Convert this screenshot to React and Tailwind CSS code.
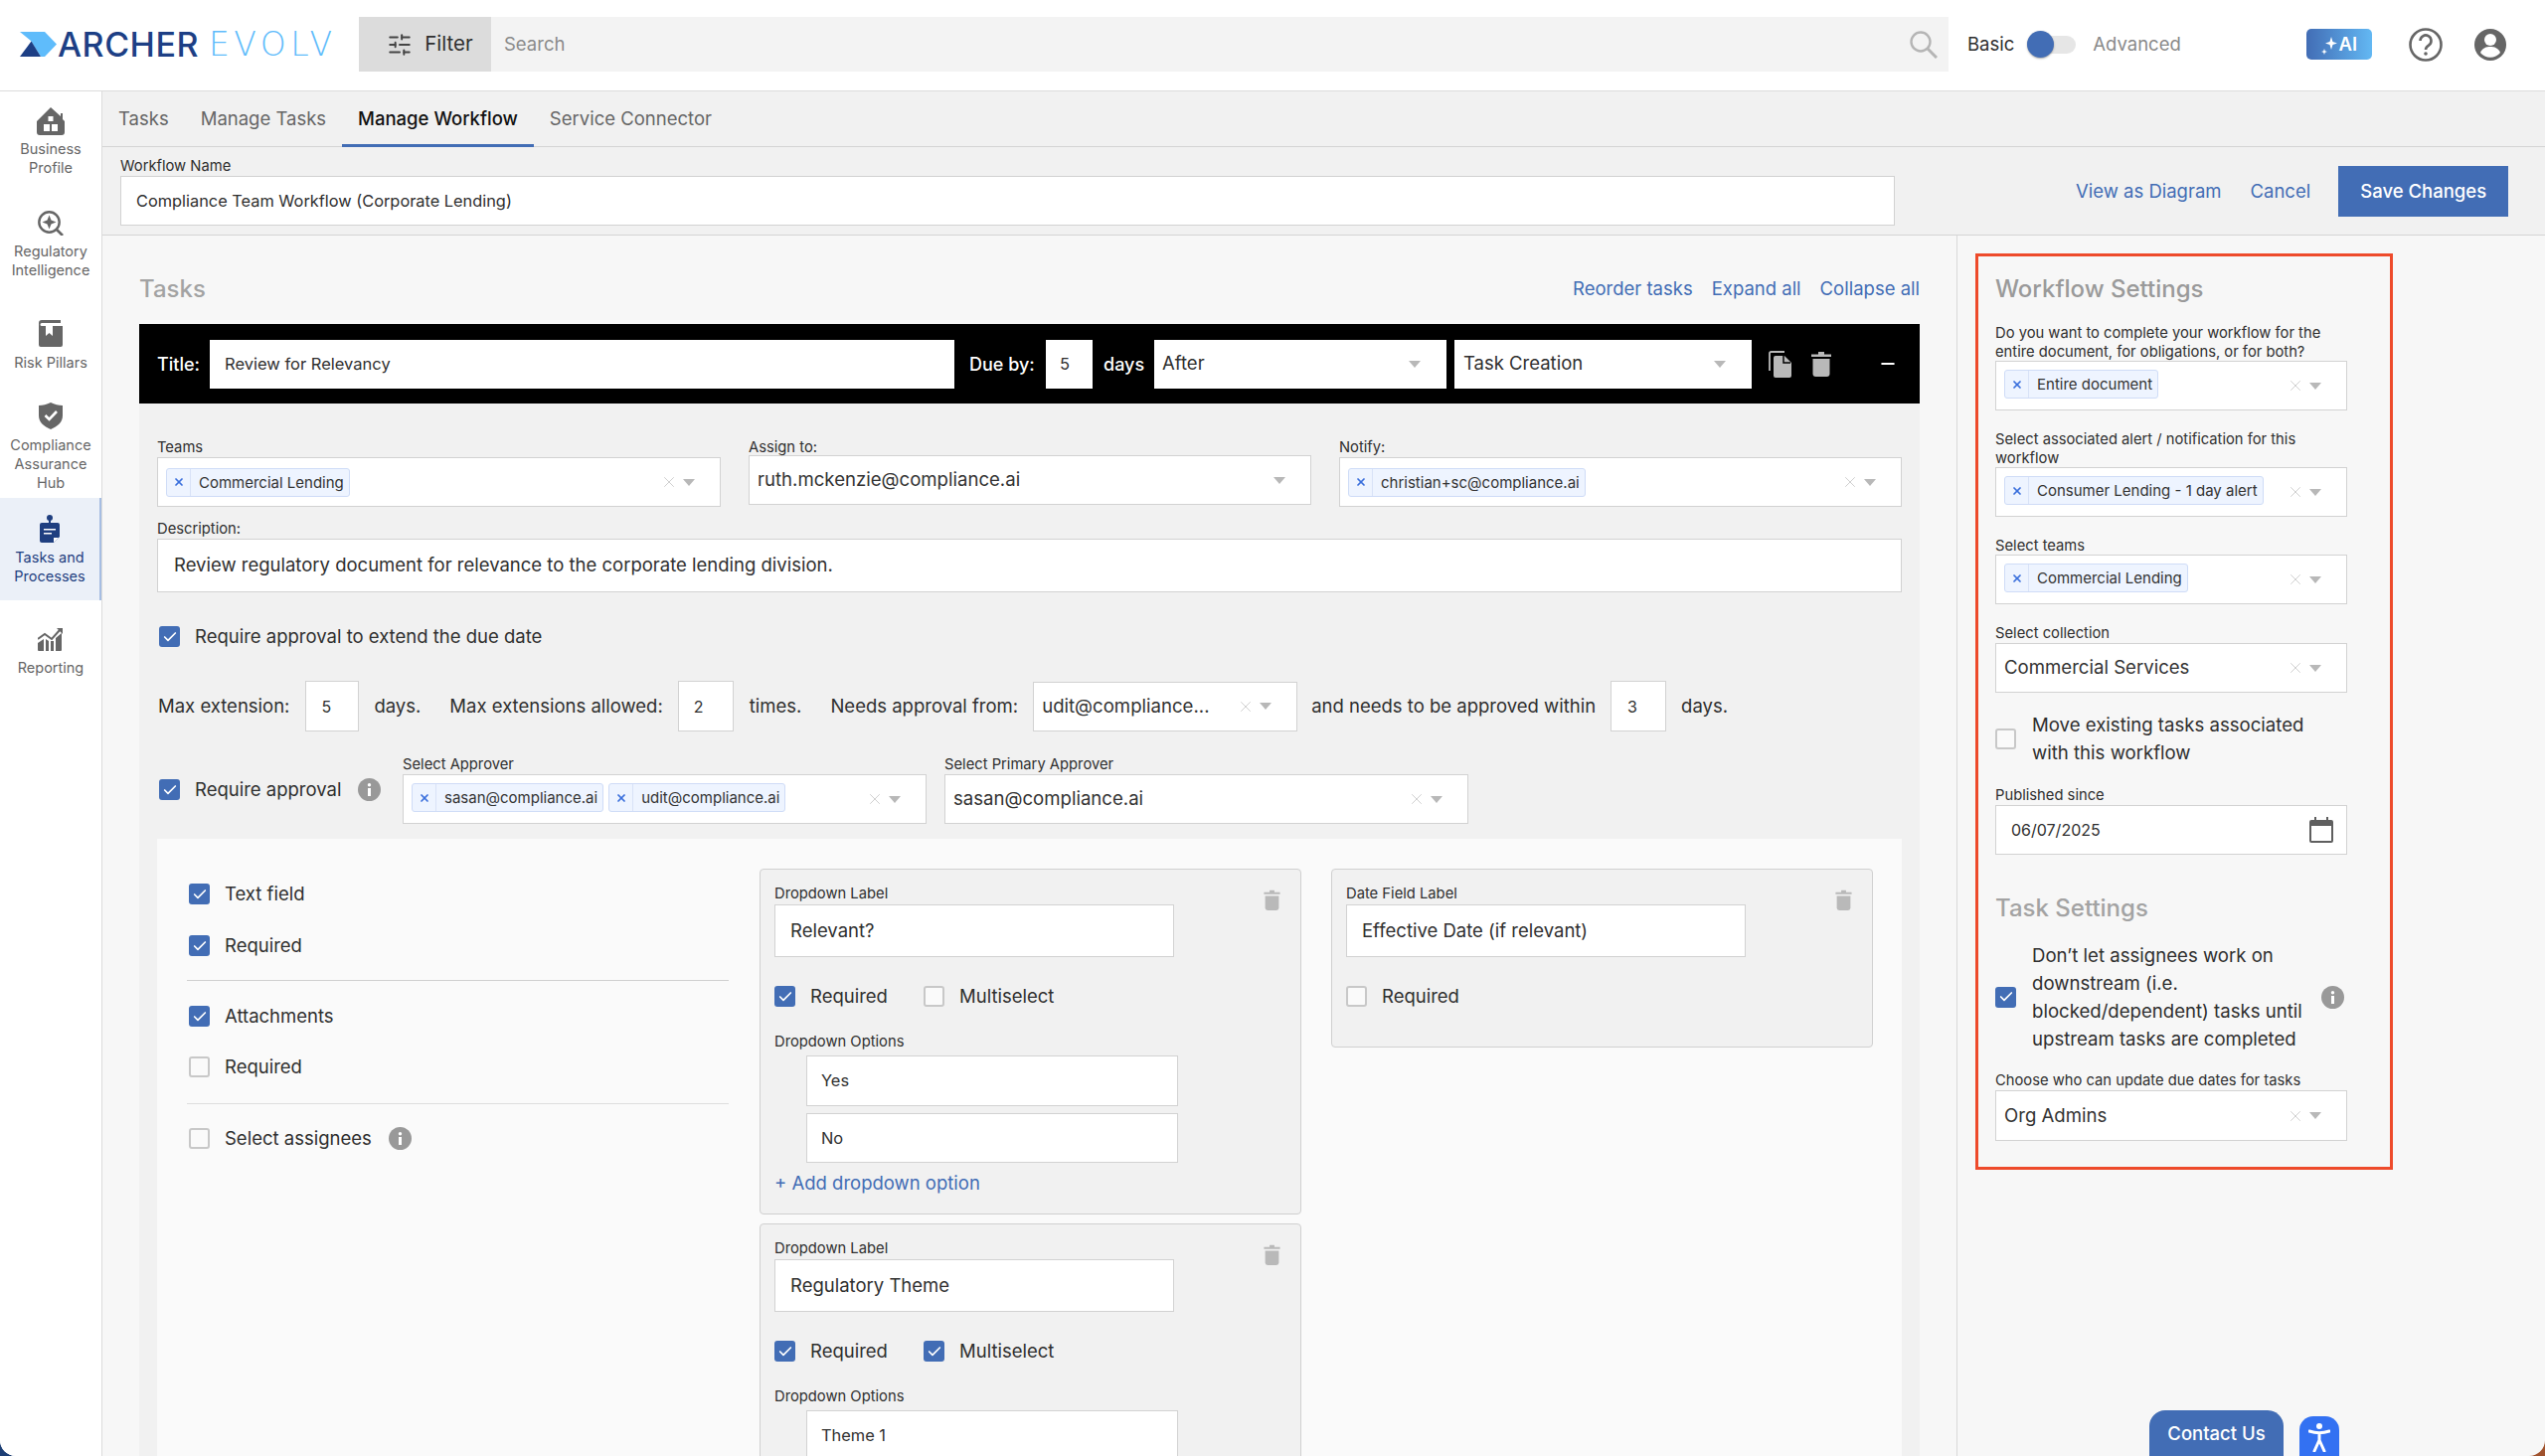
import React from "react";
import { SlidersHorizontal, X, Check, Minus } from "lucide-react";

const Caret = ({ c = "#b8b8b8" }) => (
  <svg width="12" height="7" viewBox="0 0 12 7" className="shrink-0"><path d="M0 0h12L6 7z" fill={c} /></svg>
);

const Trash = ({ c = "#b9b9b9", w = 20, h = 26 }) => (
  <svg width={w} height={h} viewBox="0 0 20 26" className="shrink-0">
    <path d="M0 3.5h20V6H0zM7 1h6v3H7z" fill={c} />
    <path d="M1.5 8h17v15a3 3 0 0 1-3 3h-11a3 3 0 0 1-3-3z" fill={c} />
  </svg>
);

const Info = () => (
  <span className="flex h-[23px] w-[23px] shrink-0 items-center justify-center rounded-full bg-[#999999]">
    <svg width="5" height="13" viewBox="0 0 5 13"><circle cx="2.5" cy="1.7" r="1.7" fill="#fff" /><rect x="1" y="5" width="3" height="8" fill="#fff" /></svg>
  </span>
);

const Box = ({ on }) =>
  on ? (
    <span className="flex h-[21px] w-[21px] shrink-0 items-center justify-center rounded-[3px] bg-[#426db5]">
      <Check size={16} color="#fff" strokeWidth={2.5} />
    </span>
  ) : (
    <span className="h-[21px] w-[21px] shrink-0 rounded-[3px] border-2 border-[#c8c8c8] bg-[#fafafa]" />
  );

const Chip = ({ t }) => (
  <span className="flex h-[29px] shrink-0 items-center rounded-[3px] border border-[#cfdcf7] bg-[#eef4ff] text-[15px] leading-none text-[#333333]">
    <span className="flex h-full w-[24px] items-center justify-center border-r border-[#d8e2f7]">
      <X size={12} color="#3a6fdc" strokeWidth={3.5} />
    </span>
    <span className="pl-[8px] pr-[5px]">{t}</span>
  </span>
);

const Sel = ({ w, chips, value, noClear, up, h = "h-[50px]" }) => (
  <div className={`flex ${h} ${w} shrink-0 items-center border border-[#d2d2d2] bg-white pl-[8px] pr-[25px]`}>
    <div className={`flex flex-1 items-center gap-[5px] overflow-hidden ${up ? "pb-[3px]" : ""}`}>
      {chips && chips.map((c) => <Chip key={c} t={c} />)}
      {value && <span className="text-[18.6px] text-[#333333]">{value}</span>}
    </div>
    {!noClear && <X size={18} color="#cfcfcf" strokeWidth={1.3} className="mr-[5px] shrink-0" />}
    <Caret />
  </div>
);

const Field = ({ t, cls = "" }) => <div className={`text-[14.75px] leading-[19px] text-[#2f2f2f] ${cls}`}>{t}</div>;

const Blue = ({ t, cls = "" }) => <span className={`text-[18.5px] text-[#426db5] ${cls}`}>{t}</span>;

const CheckRow = ({ on, t, cls = "" }) => (
  <div className={`flex h-[21px] items-center ${cls}`}>
    <Box on={on} />
    <span className="ml-[15px] text-[18.5px] text-[#2f2f2f]">{t}</span>
  </div>
);

const Input = ({ t, cls, text = "text-[18.5px]", pl = "pl-[15px]" }) => (
  <div className={`flex items-center border border-[#d2d2d2] bg-white ${pl} ${text} text-[#2f2f2f] ${cls}`}>{t}</div>
);

const DropPanel = ({ label, multi, opts, add, cls = "" }) => (
  <div className={`rounded-[4px] border border-[#d0d0d0] bg-[#f1f1f1] pl-[14px] pr-[20px] pt-[15px] pb-[18px] ${cls}`}>
    <div className="flex justify-between">
      <div className="w-[402px]">
        <Field t="Dropdown Label" />
        <Input t={label} cls="mt-px h-[53px] w-[402px]" />
      </div>
      <div className="mt-[5px]"><Trash w={17} h={21} /></div>
    </div>
    <div className="mt-[29px] flex items-center">
      <div className="w-[150px]"><CheckRow on t="Required" /></div>
      <CheckRow on={multi} t="Multiselect" />
    </div>
    <Field t="Dropdown Options" cls="mt-[26px]" />
    <Input t={opts[0]} text="text-[16.4px]" pl="pl-[14px]" cls="ml-[32px] mt-[4px] h-[51px] w-[374px]" />
    {opts[1] && <Input t={opts[1]} text="text-[16.4px]" pl="pl-[14px]" cls="ml-[32px] mt-[7px] h-[50px] w-[374px]" />}
    {add && <div className="mt-[8px] leading-[24px]"><Blue t="+ Add dropdown option" /></div>}
  </div>
);

const navItems = [
  {
    l: ["Business", "Profile"], cls: "mt-[16px]", gap: "mt-[4px]",
    i: (
      <svg width="28" height="28" viewBox="0 0 28 28"><path d="M14 0l10 9V6h2v6l2 2v11a3 3 0 0 1-3 3H3a3 3 0 0 1-3-3V14z" fill="#666" /><path d="M11.5 9h5v5h-5zM7 17h6v7H7zM15 17h6v7h-6z" fill="#fff" /></svg>
    ),
  },
  {
    l: ["Regulatory", "Intelligence"], cls: "mt-[34px]", gap: "mt-[6px]",
    i: (
      <svg width="26" height="25" viewBox="0 0 26 25"><circle cx="11.5" cy="11.5" r="10.2" fill="none" stroke="#666" strokeWidth="2.4" /><path d="M11.5 4.5l2 5 5 2-5 2-2 5-2-5-5-2 5-2z" fill="#666" /><path d="M19 19l6 6" stroke="#666" strokeWidth="2.6" /></svg>
    ),
  },
  {
    l: ["Risk Pillars"], cls: "mt-[41px]", gap: "mt-[6px]",
    i: (
      <svg width="24" height="27" viewBox="0 0 24 27"><path d="M3 0h19v3H3a1.5 1.5 0 0 0 0 3h21v19a2 2 0 0 1-2 2H2a2 2 0 0 1-2-2V3a3 3 0 0 1 3-3z" fill="#666" /><path d="M7 6h7v10l-3.5-3L7 16z" fill="#fff" /></svg>
    ),
  },
  {
    l: ["Compliance", "Assurance", "Hub"], cls: "mt-[31px]", gap: "mt-[6px]",
    i: (
      <svg width="24" height="27" viewBox="0 0 24 27"><path d="M12 0c4 2 8 3 12 3v10c0 7-5 11-12 14C5 24 0 20 0 13V3c4 0 8-1 12-3z" fill="#666" /><path d="M6.5 13l4 4 7.500-8" fill="none" stroke="#fff" strokeWidth="2.6" /></svg>
    ),
  },
];

const Nav = () => (
  <aside className="flex w-[103px] shrink-0 flex-col border-r border-[#dcdcdc] bg-white pr-0 text-center text-[14.5px] leading-[19px] text-[#666666]">
    {navItems.map((n) => (
      <div key={n.l[0]} className={n.cls}>
        <div className="flex justify-center">{n.i}</div>
        <div className={n.gap}>{n.l.map((x) => <div key={x}>{x}</div>)}</div>
      </div>
    ))}
    <div className="mt-[6px] h-[103px] border-r-2 border-[#a6bde2] bg-[#ebf0f8] pt-[17px] text-[#1f3f80]">
      <div className="flex justify-center">
        <svg width="20" height="28" viewBox="0 0 20 28"><circle cx="10" cy="3" r="3" fill="#1f3f80" /><path d="M9 5h2v4H9z" fill="#1f3f80" /><path d="M2 8h16a2 2 0 0 1 2 2v12l-6 6H2a2 2 0 0 1-2-2V10a2 2 0 0 1 2-2z" fill="#1f3f80" /><path d="M4 14h12v1.600H4zM4 18h8v1.600H4z" fill="#fff" /><path d="M14 23h5l-5 5z" fill="#fff" /></svg>
      </div>
      <div className="mt-[5px]"><div>Tasks and</div><div>Processes</div></div>
    </div>
    <div className="mt-[26px]">
      <div className="flex justify-center">
        <svg width="26" height="25" viewBox="0 0 26 25"><path d="M0 13l7-5 7 5 8-9" fill="none" stroke="#666" strokeWidth="2" /><path d="M19 2h6v6z" fill="#666" /><path d="M0 17l6-4v12H1a1 1 0 0 1-1-1zM8 13l3 2v10H8zM13 15l3 0v10h-3zM18 12l6-5v17a1 1 0 0 1-1 1h-5z" fill="#666" /></svg>
      </div>
      <div className="mt-[7px]">Reporting</div>
    </div>
  </aside>
);

const Header = () => (
  <header className="flex h-[92px] items-center border-b border-[#dcdcdc] bg-white pb-[2px] pl-[20px]">
    <div className="flex h-[25px] w-[341px] shrink-0 items-center">
      <svg width="37" height="25" viewBox="0 0 37 25" className="shrink-0"><path d="M0 0h25l12 12.500L25 25h-4L11 9z" fill="#5fbcfb" /><path d="M0 25L11.500 9.500 21 25z" fill="#1d3f85" /></svg>
      <span className="ml-[1px] text-[34px] font-medium leading-none tracking-[0.5px] text-[#1d3f85]">ARCHER</span>
      <span className="ml-[10px] font-['DejaVu_Sans',sans-serif] text-[33px] font-extralight leading-none tracking-[4.5px] text-[#5fbcfb]">EVOLV</span>
    </div>
    <div className="flex h-[55px] w-[133px] shrink-0 items-center justify-center gap-[12px] bg-[#dcdcdc] pl-[10px] text-[20.5px] text-[#2f2f2f]">
      <SlidersHorizontal size={26} color="#444" strokeWidth={1.8} />
      Filter
    </div>
    <div className="flex h-[55px] w-[1466px] shrink-0 items-center justify-between bg-[#f3f3f3] pl-[13px] pr-[11px] text-[18.5px] text-[#8a8a8a]">
      Search
      <svg width="28" height="28" viewBox="0 0 28 28"><circle cx="11" cy="11" r="9.500" fill="none" stroke="#b5b5b5" strokeWidth="2.4" /><path d="M18 18l9 9" stroke="#b5b5b5" strokeWidth="3" /></svg>
    </div>
    <span className="ml-[19px] text-[18.5px] text-[#2f2f2f]">Basic</span>
    <div className="ml-[13px] flex h-[27px] w-[49px] items-center">
      <div className="h-[18px] w-[49px] rounded-full bg-[#e6e6e6]" />
      <div className="-ml-[49px] h-[27px] w-[27px] rounded-full bg-[#426db5] shadow-[0_1px_2px_rgba(0,0,0,0.35)]" />
    </div>
    <span className="ml-[17px] text-[18.5px] text-[#8a8a8a]">Advanced</span>
    <div className="ml-[126px] flex h-[31px] w-[66px] items-center justify-center gap-[2px] rounded-[5px] bg-linear-to-r from-[#426db5] to-[#63b8f3] text-[18.5px] font-semibold text-white">
      <svg width="16" height="20" viewBox="0 0 16 20"><path d="M10 2l1.500 5 4.500 1.500-4.500 1.500L10 15l-1.500-5L4 8.500 8.500 7z" fill="#fff" /><path d="M3 14l.8 2.200L6 17l-2.200.8L3 20l-.8-2.200L0 17l2.200-.8z" fill="#fff" /></svg>
      AI
    </div>
    <svg width="34" height="34" viewBox="0 0 34 34" className="ml-[37px] shrink-0"><circle cx="17" cy="17" r="15.500" fill="none" stroke="#666" strokeWidth="2.6" /><path d="M11.500 13a5.500 5.500 0 1 1 8.500 4.600c-2 1.300-3 2-3 4.400" fill="none" stroke="#666" strokeWidth="2.6" /><circle cx="17" cy="26" r="1.800" fill="#666" /></svg>
    <svg width="32" height="32" viewBox="0 0 32 32" className="ml-[32px] shrink-0"><circle cx="16" cy="16" r="16" fill="#666" /><circle cx="16" cy="11" r="6" fill="#fff" /><path d="M6 24c2-5 6-6 10-6s8 1 10 6a13 13 0 0 1-20 0z" fill="#fff" /></svg>
  </header>
);

const Tabs = () => (
  <div className="flex h-[56px] border-b border-[#d4d4d4] bg-[#f1f1f1] text-[18.5px] text-[#666666]">
    <div className="px-[16px] pt-[14px]">Tasks</div>
    <div className="px-[16px] pt-[14px]">Manage Tasks</div>
    <div className="h-[56px] border-b-[3px] border-[#426db5] px-[16px] pt-[14px] font-medium text-[#111111]">Manage Workflow</div>
    <div className="px-[16px] pt-[14px]">Service Connector</div>
  </div>
);

const NameRow = () => (
  <div className="flex h-[89px] border-b border-[#d4d4d4] bg-[#f1f1f1] pl-[18px]">
    <div className="w-[1785px] shrink-0 pt-[10px]">
      <Field t="Workflow Name" />
      <Input t="Compliance Team Workflow (Corporate Lending)" text="text-[16.35px]" cls="h-[50px] w-full" />
    </div>
    <div className="ml-[182px] mt-[19px] flex h-[51px] items-center">
      <Blue t="View as Diagram" />
      <Blue t="Cancel" cls="ml-[29px]" />
      <div className="ml-[28px] flex h-[51px] w-[171px] items-center justify-center bg-[#426db5] text-[18.5px] font-medium text-white">Save Changes</div>
    </div>
  </div>
);

const TaskBar = () => (
  <div className="flex h-[80px] items-center bg-black pl-[18px] text-[18px] text-white">
    <span className="w-[53px] font-medium">Title:</span>
    <Input t="Review for Relevancy" text="text-[16.5px]" cls="h-[49px] w-[749px] border-0" />
    <span className="ml-[15px] w-[77px] font-medium">Due by:</span>
    <Input t="5" text="text-[16.5px]" pl="pl-[14px]" cls="h-[49px] w-[47px] border-0" />
    <span className="ml-[11px] w-[51px] font-medium">days</span>
    <div className="flex h-[49px] w-[294px] items-center justify-between bg-white pl-[8px] pr-[26px] text-[18.5px] text-[#2f2f2f]">After<Caret /></div>
    <div className="ml-[8px] flex h-[49px] w-[299px] items-center justify-between bg-white pl-[9px] pr-[26px] text-[18.5px] text-[#2f2f2f]">Task Creation<Caret /></div>
    <svg width="23" height="27" viewBox="0 0 23 27" className="ml-[17px] shrink-0"><path d="M1 20V2.500A1.500 1.500 0 0 1 2.500 1H16" fill="none" stroke="#b9b9b9" strokeWidth="1.800" /><path d="M7 5h9l7 7v13a2 2 0 0 1-2 2H7a2 2 0 0 1-2-2V7a2 2 0 0 1 2-2z" fill="#b9b9b9" /><path d="M15 5v7h7" fill="none" stroke="#000" strokeWidth="1.500" /></svg>
    <div className="ml-[20px]"><Trash /></div>
    <Minus size={20} color="#fff" strokeWidth={2.4} className="ml-[47px]" />
  </div>
);

const InnerPanel = () => (
  <div className="mt-[15px] flex bg-[#fafafa] pl-[30px] pt-[30px]">
    <div className="w-[545px] shrink-0">
      <CheckRow on t="Text field" cls="mt-[15px] pl-[2px]" />
      <CheckRow on t="Required" cls="mt-[31px] pl-[2px]" />
      <div className="mt-[24px] h-px bg-[#cfcfcf]" />
      <CheckRow on t="Attachments" cls="mt-[25px] pl-[2px]" />
      <CheckRow t="Required" cls="mt-[30px] pl-[2px]" />
      <div className="mt-[26px] h-px bg-[#dedede]" />
      <div className="mt-[24px] flex h-[21px] items-center pl-[2px]">
        <Box />
        <span className="ml-[15px] text-[18.5px] text-[#2f2f2f]">Select assignees</span>
        <span className="ml-[17px]"><Info /></span>
      </div>
    </div>
    <div className="ml-[31px] w-[545px] shrink-0">
      <DropPanel label="Relevant?" opts={["Yes", "No"]} add />
      <DropPanel label="Regulatory Theme" multi opts={["Theme 1"]} cls="mt-[9px]" />
    </div>
    <div className="ml-[30px] h-[180px] w-[545px] shrink-0 rounded-[4px] border border-[#d0d0d0] bg-[#f1f1f1] pl-[14px] pr-[20px] pt-[15px]">
      <div className="flex justify-between">
        <div className="w-[402px]">
          <Field t="Date Field Label" />
          <Input t="Effective Date (if relevant)" cls="mt-px h-[53px] w-[402px]" />
        </div>
        <div className="mt-[5px]"><Trash w={17} h={21} /></div>
      </div>
      <CheckRow t="Required" cls="mt-[29px]" />
    </div>
  </div>
);

const LeftCol = () => (
  <div className="w-[1866px] shrink-0 border-r border-[#d8d8d8] pl-[37px] pr-[37px]">
    <div className="flex h-[89px] items-center justify-between pt-[19px]">
      <span className="text-[24px] font-medium text-[#a3a3a3]">Tasks</span>
      <div className="flex gap-[19px]">
        <Blue t="Reorder tasks" />
        <Blue t="Expand all" />
        <Blue t="Collapse all" />
      </div>
    </div>
    <TaskBar />
    <div className="bg-[#f1f1f1] px-[18px] pt-[35px]">
      <div className="flex">
        <div className="w-[567px] shrink-0">
          <Field t="Teams" />
          <Sel w="w-[567px]" chips={["Commercial Lending"]} />
        </div>
        <div className="ml-[28px] w-[566px] shrink-0">
          <Field t="Assign to:" />
          <Sel w="w-[566px] mt-[-2px]" noClear value="ruth.mckenzie@compliance.ai" />
        </div>
        <div className="ml-[28px] w-[566px] shrink-0">
          <Field t="Notify:" />
          <Sel w="w-[566px]" chips={["christian+sc@compliance.ai"]} />
        </div>
      </div>
      <Field t="Description:" cls="mt-[13px]" />
      <Input t="Review regulatory document for relevance to the corporate lending division." pl="pl-[16px]" cls="h-[54px] w-full" />
      <CheckRow on t="Require approval to extend the due date" cls="mt-[34px] pl-[2px]" />
      <div className="mt-[34px] flex h-[51px] items-center text-[18.5px] text-[#2f2f2f]">
        <span className="ml-[1px]">Max extension:</span>
        <Input t="5" text="text-[16px]" cls="ml-[16px] h-[51px] w-[54px]" />
        <span className="ml-[15px]">days.</span>
        <span className="ml-[29px]">Max extensions allowed:</span>
        <Input t="2" text="text-[16px]" cls="ml-[15px] h-[51px] w-[56px]" />
        <span className="ml-[16px]">times.</span>
        <span className="ml-[29px]">Needs approval from:</span>
        <Sel w="w-[266px] ml-[15px]" value="udit@compliance..." />
        <span className="ml-[14px]">and needs to be approved within</span>
        <Input t="3" text="text-[16px]" pl="pl-[16px]" cls="ml-[15px] h-[51px] w-[56px]" />
        <span className="ml-[15px]">days.</span>
      </div>
      <div className="mt-[24px] flex items-start">
        <div className="mt-[23px] flex w-[247px] items-center pl-[2px]">
          <Box on />
          <span className="ml-[15px] text-[18.5px] leading-[21px] text-[#2f2f2f]">Require approval</span>
          <span className="ml-[17px]"><Info /></span>
        </div>
        <div className="w-[527px] shrink-0">
          <Field t="Select Approver" />
          <Sel w="w-[527px]" up chips={["sasan@compliance.ai", "udit@compliance.ai"]} />
        </div>
        <div className="ml-[18px] w-[527px] shrink-0">
          <Field t="Select Primary Approver" />
          <Sel w="w-[527px]" value="sasan@compliance.ai" />
        </div>
      </div>
      <InnerPanel />
    </div>
  </div>
);

const Settings = () => (
  <div className="ml-[18px] mt-[18px] h-[922px] w-[420px] shrink-0 border-[3px] border-[#ee4b2b] pl-[17px] pt-[17px]">
    <div className="text-[24px] font-medium leading-[32px] text-[#9a9a9a]">Workflow Settings</div>
    <Field t={<>Do you want to complete your workflow for the<br />entire document, for obligations, or for both?</>} cls="mb-[-1px] mt-[19px]" />
    <Sel w="w-[354px]" up chips={["Entire document"]} />
    <Field t={<>Select associated alert / notification for this<br />workflow</>} cls="mb-[-1px] mt-[20px]" />
    <Sel w="w-[354px]" up chips={["Consumer Lending - 1 day alert"]} />
    <Field t="Select teams" cls="mb-[-1px] mt-[20px]" />
    <Sel w="w-[354px]" up chips={["Commercial Lending"]} />
    <Field t="Select collection" cls="mt-[20px]" />
    <Sel w="w-[354px]" value="Commercial Services" />
    <div className="mt-[18px] flex h-[56px] items-center">
      <Box />
      <span className="ml-[16px] text-[18.6px] leading-[28px] text-[#2f2f2f]">Move existing tasks associated<br />with this workflow</span>
    </div>
    <Field t="Published since" cls="mt-[20px]" />
    <div className="flex h-[50px] w-[354px] items-center justify-between border border-[#d2d2d2] bg-white pl-[15px] pr-[13px] text-[16px] text-[#2f2f2f]">
      06/07/2025
      <svg width="24" height="26" viewBox="0 0 24 26"><path d="M5 0h2v3h10V0h2v3h3a2 2 0 0 1 2 2v19a2 2 0 0 1-2 2H2a2 2 0 0 1-2-2V5a2 2 0 0 1 2-2h3z" fill="#5f5f5f" /><path d="M2 9h20v15H2z" fill="#fff" /></svg>
    </div>
    <div className="mt-[38px] text-[24px] font-medium leading-[32px] text-[#a3a3a3]">Task Settings</div>
    <div className="mt-[17px] flex h-[112px] items-center">
      <Box on />
      <span className="ml-[16px] w-[291px] shrink-0 text-[18.6px] leading-[28px] text-[#2f2f2f]">Don’t let assignees work on<br />downstream (i.e.<br />blocked/dependent) tasks until<br />upstream tasks are completed</span>
      <Info />
    </div>
    <Field t="Choose who can update due dates for tasks" cls="mt-[19px]" />
    <Sel w="w-[354px]" h="h-[51px]" value="Org Admins" />
  </div>
);

export default function App() {
  return (
    <div className="h-[1465px] w-[2560px] bg-linear-to-r from-[#1d3f75] to-[#a0522d] font-[Inter,sans-serif] text-[#2f2f2f]">
      <div className="relative h-[1465px] w-[2560px] overflow-hidden rounded-b-[16px] bg-[#f7f7f7]">
        <Header />
        <div className="flex h-[1373px]">
          <Nav />
          <div className="flex min-w-0 flex-1 flex-col">
            <Tabs />
            <NameRow />
            <div className="flex min-h-0 flex-1 overflow-hidden">
              <LeftCol />
              <Settings />
            </div>
          </div>
        </div>
        <div className="absolute bottom-0 left-[2162px] flex h-[46px] w-[135px] items-start justify-center rounded-t-[16px] bg-[#426db5] pt-[10px] text-[18.5px] font-medium text-white">Contact Us</div>
        <div className="absolute bottom-0 left-[2313px] flex h-[40px] w-[40px] items-start justify-center rounded-t-[14px] bg-[#3371f2] pt-[7px]">
          <svg width="22" height="29" viewBox="0 0 22 29"><circle cx="11" cy="3" r="3" fill="#fff" /><path d="M1 8c6 2 14 2 20 0M11 10v8M11 17l-5 11M11 17l5 11" fill="none" stroke="#fff" strokeWidth="3" strokeLinecap="round" /></svg>
        </div>
      </div>
    </div>
  );
}
